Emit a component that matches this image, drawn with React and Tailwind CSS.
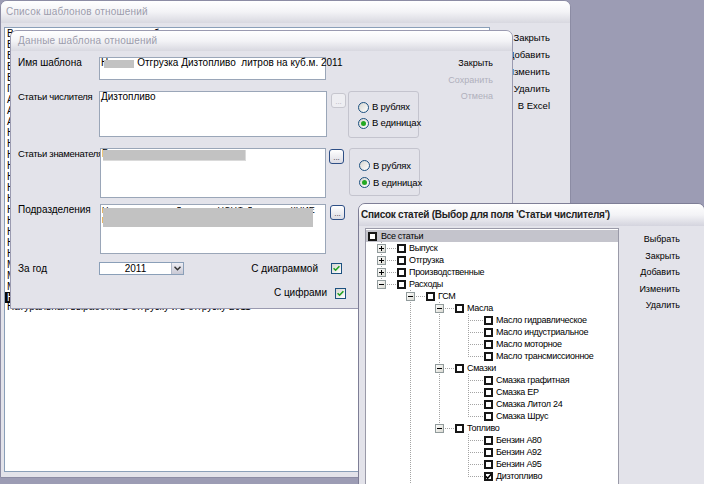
import React from "react";

const listRows = [
  "Выпуск продукции на одного работника",
  "Выработка на одного работника",
  "Выручка от реализации продукции",
  "Выручка на одного работника",
  "Выручка к затратам",
  "Горюче-смазочные материалы на единицу",
  "Амортизация к выручке",
  "Аренда к выручке",
  "Административные расходы к выручке",
  "Налоги к выручке",
  "Накладные расходы к выручке",
  "Натуральная выработка на единицу",
  "Натуральные показатели отгрузки",
  "Начисления к фонду оплаты труда",
  "Незавершенное производство",
  "Нормативные затраты",
  "Нормы расхода топлива",
  "Нормы расхода масел",
  "Нормы расхода смазок",
  "Нагрузка на единицу техники",
  "Наработка техники",
  "Материалы к выручке",
  "Материальные затраты",
  "Масла на единицу продукции",
];

const TREE = [
  { l: 0, t: "Все статьи", sel: true },
  { l: 1, t: "Выпуск" },
  { l: 1, t: "Отгрузка" },
  { l: 1, t: "Производственные" },
  { l: 1, t: "Расходы" },
  { l: 2, t: "ГСМ" },
  { l: 3, t: "Масла" },
  { l: 4, t: "Масло гидравлическое" },
  { l: 4, t: "Масло индустриальное" },
  { l: 4, t: "Масло моторное" },
  { l: 4, t: "Масло трансмиссионное" },
  { l: 3, t: "Смазки" },
  { l: 4, t: "Смазка графитная" },
  { l: 4, t: "Смазка ЕР" },
  { l: 4, t: "Смазка Литол 24" },
  { l: 4, t: "Смазка Шрус" },
  { l: 3, t: "Топливо" },
  { l: 4, t: "Бензин А80" },
  { l: 4, t: "Бензин А92" },
  { l: 4, t: "Бензин А95" },
  { l: 4, t: "Дизтопливо", checked: true },
];

const indent = ["pl-[2px]", "pl-[31px]", "pl-[60px]", "pl-[89px]", "pl-[118px]"];

function Radio({ checked }) {
  return (
    <span className="flex h-[11px] w-[11px] shrink-0 items-center justify-center rounded-full border border-[#1c5180] bg-linear-to-br from-[#d6d6d0] to-white">
      {checked && <span className="h-[5px] w-[5px] rounded-full bg-[#23a923]" />}
    </span>
  );
}

function Check() {
  return (
    <span className="flex h-[11px] w-[11px] shrink-0 items-center justify-center border border-[#1c5180] bg-linear-to-br from-[#d6d6d0] to-white">
      <svg width="7" height="7" viewBox="0 0 7 7">
        <path d="M0.6 3.2 L2.6 5.2 L6.4 1.2" stroke="#21a121" strokeWidth="1.6" fill="none" />
      </svg>
    </span>
  );
}

function Dots({ disabled }) {
  return (
    <div
      className={
        disabled
          ? "flex h-[15px] w-[15px] shrink-0 items-end justify-center rounded-[3px] border border-[#c6c6ce] bg-[#eeeef2] pb-[1px] text-[8px] leading-[8px] text-[#b4b4bc]"
          : "flex h-[15px] w-[15px] shrink-0 items-end justify-center rounded-[3px] border border-[#2e4f86] bg-linear-to-b from-white to-[#dcdce4] pb-[1px] text-[8px] leading-[8px] text-[#333]"
      }
    >
      ...
    </div>
  );
}

function RadioGroup({ tall }) {
  return (
    <div
      className={
        tall
          ? "ml-[2px] flex h-[48px] w-[71px] flex-col rounded-[3px] border border-[#c4c4ce] pl-[9px] pt-[8px]"
          : "ml-[2px] flex h-[47px] w-[71px] flex-col rounded-[3px] border border-[#c4c4ce] pl-[9px] pt-[7px]"
      }
    >
      <div className={tall ? "flex h-[17px] items-center gap-[3px] whitespace-nowrap" : "flex h-[16px] items-center gap-[3px] whitespace-nowrap"}>
        <Radio />
        <span className="text-[9.5px] tracking-[-0.2px]">В рублях</span>
      </div>
      <div className={tall ? "flex h-[17px] items-center gap-[3px] whitespace-nowrap" : "flex h-[16px] items-center gap-[3px] whitespace-nowrap"}>
        <Radio checked />
        <span className="text-[9.5px] tracking-[-0.2px]">В единицах</span>
      </div>
    </div>
  );
}

function TreeLines() {
  const hl = [];
  const vl = [];
  const dash = { stroke: "#a4a4a4", strokeDasharray: "1 1", shapeRendering: "crispEdges" };
  const cy = (n) => 7 + 12 * n;
  vl.push([15.5, 13, cy(4)]);
  vl.push([44.5, 61, 270]);
  vl.push([73.5, 73, cy(16)]);
  vl.push([102.5, 85, cy(10)]);
  vl.push([102.5, 145, cy(15)]);
  vl.push([102.5, 205, cy(20)]);
  TREE.forEach((r, n) => {
    if (r.l === 0) return;
    const ex = -14 + 29 * r.l;
    hl.push([ex, ex + 15, cy(n) + 0.5]);
  });
  const boxes = [];
  TREE.forEach((r, n) => {
    if (r.l === 0 || r.l === 4) return;
    const ex = -14 + 29 * r.l;
    const expanded = !(r.l === 1 && n < 4);
    boxes.push({ x: ex, y: cy(n), plus: !expanded });
  });
  return (
    <svg className="pointer-events-none absolute left-0 top-0" width="254" height="270">
      <defs>
        <linearGradient id="exg" x1="0" y1="0" x2="1" y2="1">
          <stop offset="0" stopColor="#ffffff" />
          <stop offset="1" stopColor="#d8d8d0" />
        </linearGradient>
      </defs>
      {vl.map(([x, a, b], i) => (
        <line key={"v" + i} x1={x} y1={a} x2={x} y2={b} {...dash} />
      ))}
      {hl.map(([a, b, y], i) => (
        <line key={"h" + i} x1={a} y1={y} x2={b} y2={y} {...dash} />
      ))}
      {boxes.map((b, i) => (
        <g key={"b" + i} shapeRendering="crispEdges">
          <rect x={b.x - 4 + 0.5} y={b.y - 4 + 0.5} width="8" height="8" fill="url(#exg)" stroke="#919b9c" />
          <line x1={b.x - 2} y1={b.y + 0.5} x2={b.x + 3} y2={b.y + 0.5} stroke="#000" />
          {b.plus && <line x1={b.x + 0.5} y1={b.y - 2} x2={b.x + 0.5} y2={b.y + 3} stroke="#000" />}
        </g>
      ))}
    </svg>
  );
}

export default function App() {
  return (
    <div className="relative h-[484px] w-[704px] overflow-hidden bg-[#9c9cb4] font-['Liberation_Sans',sans-serif] text-[10px] leading-[12px] text-black">
      {/* Window 1 */}
      <div className="absolute left-0 top-0 flex h-[478px] w-[571px] flex-col rounded-t-[7px] border border-[#8c8ca4] bg-[#e3e3ea]">
        <div className="flex h-[22px] shrink-0 items-center rounded-t-[6px] bg-linear-to-b from-white via-[#f3f3f6] to-[#d8d8e0] pl-[5px] text-[10px] tracking-[0.2px] text-[#9c9cac]">
          Список шаблонов отношений
        </div>
        <div className="flex min-h-0 flex-1 pb-[5px] pl-[3px] pt-[4px]">
          <div className="w-[486px] shrink-0 overflow-hidden border border-[#8a9fb8] bg-white">
            {listRows.map((t, i) => (
              <div key={i} className="h-[11px] whitespace-nowrap pl-[2px] leading-[11px]">
                {t}
              </div>
            ))}
            <div className="h-[11px] whitespace-nowrap bg-[#0a0a0a] pl-[2px] leading-[11px] text-white">
              Натуральная выработка на куб.м.
            </div>
            <div className="h-[11px] whitespace-nowrap pl-[2px] leading-[8px]">
              Натуральная выработка в отгрузку и в отгрузку 2011
            </div>
          </div>
          <div className="flex flex-1 flex-col items-end pr-[20px] pt-[2px] text-[9.5px]">
            {["Закрыть", "Добавить", "Изменить", "Удалить", "В Excel"].map((b) => (
              <div key={b} className="h-[17px] leading-[17px]">
                {b}
              </div>
            ))}
          </div>
        </div>
      </div>

      {/* Dialog 2 */}
      <div className="absolute left-[10px] top-[30px] flex h-[279px] w-[503px] flex-col rounded-t-[7px] border border-[#9a9ab0] bg-[#e3e3ea]">
        <div className="flex h-[20px] shrink-0 items-center rounded-t-[6px] bg-linear-to-b from-white via-[#f3f3f6] to-[#d8d8e0] pl-[7px] text-[10px] tracking-[0.2px] text-[#9c9cac]">
          Данные шаблона отношений
        </div>
        <div className="flex flex-1">
          <div className="flex w-[410px] flex-col pl-[7px] pt-[6px]">
            {/* row 1 */}
            <div className="flex">
              <div className="w-[81px] shrink-0 whitespace-nowrap">Имя шаблона</div>
              <div className="relative h-[23px] w-[227px] whitespace-nowrap border border-[#9aa6b8] bg-white pl-[1px] leading-[10px]">
                <span>Н</span>
                <span className="inline-block w-[29px]" />
                Отгрузка Дизтопливо&nbsp; литров на куб.м. 2011
                <span className="absolute left-[4px] top-[2px] h-[8px] w-[30px] bg-[#c2c2c2]" />
              </div>
            </div>
            {/* row 2 */}
            <div className="mt-[11px] flex">
              <div className="w-[81px] shrink-0 whitespace-nowrap text-[9.5px] tracking-[-0.3px]">Статьи числителя</div>
              <div className="h-[46px] w-[228px] border border-[#9aa6b8] bg-white pl-[1px] leading-[10px]">Дизтопливо</div>
              <div className="ml-[4px] mt-[2px]">
                <Dots disabled />
              </div>
              <RadioGroup />
            </div>
            {/* row 3 */}
            <div className="mt-[10px] flex">
              <div className="w-[82px] shrink-0 whitespace-nowrap text-[9.5px] tracking-[-0.3px]">Статьи знаменателя</div>
              <div className="relative h-[50px] w-[226px] border border-[#9aa6b8] bg-white pl-[1px] leading-[10px]">
                Г
                <span className="absolute left-[2px] top-[1px] h-[11px] w-[143px] border-b border-r border-[#dadada] bg-[#c2c2c2]" />
              </div>
              <div className="ml-[3px] mt-[1px]">
                <Dots />
              </div>
              <div className="ml-[3px]">
                <RadioGroup tall />
              </div>
            </div>
            {/* row 4 */}
            <div className="mt-[6px] flex">
              <div className="w-[82px] shrink-0 whitespace-nowrap">Подразделения</div>
              <div className="relative h-[50px] w-[226px] overflow-hidden whitespace-nowrap border border-[#9aa6b8] bg-white pl-[1px] text-[9px] leading-[10px]">
                <div>
                  <span>Н</span>
                  <span className="inline-block w-[67px]" />
                  <span>Д</span>
                  <span className="inline-block w-[36px]" />
                  <span>НСНФ Д</span>
                  <span className="inline-block w-[38px]" />
                  <span>КНИЕ</span>
                </div>
                <div>Г</div>
                <span className="absolute left-[2px] top-[3px] h-[19px] w-[210px] bg-[#c2c2c2]" />
              </div>
              <div className="ml-[4px] mt-[1px]">
                <Dots />
              </div>
            </div>
            {/* row 5 */}
            <div className="mt-[8px] flex items-center">
              <div className="w-[81px] shrink-0">За год</div>
              <div className="flex h-[13px] w-[85px] items-stretch border border-[#8a9fb8] bg-white">
                <div className="flex-1 text-center leading-[11px]">2011</div>
                <div className="flex w-[12px] items-center justify-center border-l border-[#b0b8c8] bg-linear-to-b from-[#eeeef4] to-[#c8c8d4]">
                  <svg width="7" height="5" viewBox="0 0 7 5">
                    <path d="M0.5 0.8 L3.5 3.8 L6.5 0.8" stroke="#333" strokeWidth="1.5" fill="none" />
                  </svg>
                </div>
              </div>
              <div className="flex w-[158px] items-center justify-end">
                <span className="mr-[13px] whitespace-nowrap">С диаграммой</span>
                <Check />
              </div>
            </div>
            {/* row 6 */}
            <div className="mt-[12px] flex items-center justify-end pr-[75px]">
              <span className="mr-[8px] whitespace-nowrap">С цифрами</span>
              <Check />
            </div>
          </div>
          <div className="flex flex-1 flex-col items-end pr-[19px] pt-[4px] text-[9px]">
            <div className="h-[17px] leading-[17px]">Закрыть</div>
            <div className="h-[16px] leading-[16px] text-[#b0b0bc]">Сохранить</div>
            <div className="h-[16px] leading-[16px] text-[#b0b0bc]">Отмена</div>
          </div>
        </div>
      </div>

      {/* Dialog 3 */}
      <div className="absolute left-[358px] top-[203px] flex h-[300px] w-[347px] flex-col rounded-t-[7px] border border-[#7e7e96] bg-[#e3e3ea]">
        <div className="flex h-[22px] shrink-0 items-center whitespace-nowrap rounded-t-[6px] bg-linear-to-b from-white via-[#f3f3f6] to-[#d4d4de] pl-[2px] text-[10px] font-bold tracking-[-0.25px] text-[#222]">
          Список статей (Выбор для поля 'Статьи числителя')
        </div>
        <div className="flex flex-1 pl-[6px] pt-[2px] text-[9px]">
          <div className="relative h-[280px] w-[254px] shrink-0 border border-[#9a9aa8] bg-white pt-[1px]">
            {TREE.map((r, n) => (
              <div
                key={n}
                className={
                  (r.sel ? "bg-[#c4c4cc] " : "") +
                  "flex h-[12px] items-center whitespace-nowrap leading-[12px] tracking-[-0.3px] " +
                  indent[r.l]
                }
              >
                <span className="flex h-[9px] w-[9px] shrink-0 items-center justify-center border-2 border-[#161616] bg-white">
                  {r.checked && (
                    <svg width="7" height="7" viewBox="0 0 7 7" className="shrink-0">
                      <path d="M0.8 3.2 L2.6 5.2 L6.2 1.2" stroke="#000" strokeWidth="1.6" fill="none" />
                    </svg>
                  )}
                </span>
                <span className={r.l === 0 ? "ml-[4px]" : "ml-[3px]"}>{r.t}</span>
              </div>
            ))}
            <TreeLines />
          </div>
          <div className="flex flex-1 flex-col items-end pr-[24px] pt-[3px]">
            {["Выбрать", "Закрыть", "Добавить", "Изменить", "Удалить"].map((b) => (
              <div key={b} className="h-[16.5px] leading-[16px]">
                {b}
              </div>
            ))}
          </div>
        </div>
      </div>
    </div>
  );
}
